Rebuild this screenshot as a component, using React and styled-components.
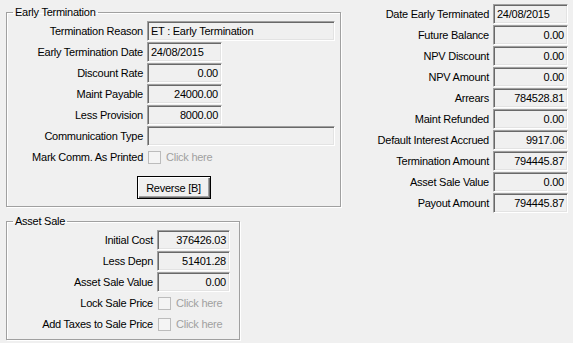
import React from "react";
import styled, { createGlobalStyle } from "styled-components";

const GlobalStyle = createGlobalStyle`
  html, body { margin: 0; padding: 0; background: #f0f0f0; }
  body {
    font-family: "Liberation Sans", Arial, sans-serif;
    font-size: 11px;
    letter-spacing: -0.25px;
    color: #000;
  }
`;

const Page = styled.div`
  width: 573px;
  height: 343px;
  display: grid;
  grid-template-columns: 341px 1fr;
  overflow: hidden;
  background: #f0f0f0;
`;

const LeftCol = styled.div`
  padding-left: 6px;
  display: flex;
  flex-direction: column;
`;

const GroupBox = styled.fieldset`
  box-sizing: border-box;
  width: ${(p) => p.$width}px;
  margin: ${(p) => p.$top}px 0 0 0;
  padding: ${(p) => p.$padTop}px 5px ${(p) => p.$padBottom}px 0;
  border: 1px solid #a0a0a0;
  box-shadow: inset 1px 1px 0 #fff, 1px 1px 0 #fff;
  min-width: 0;
`;

const Legend = styled.legend`
  margin-left: 6px;
  padding: 0 2px;
  line-height: 14px;
  height: 14px;
`;

const Rows = styled.div`
  display: grid;
  grid-template-columns: ${(p) => p.$label}px auto;
  column-gap: 4px;
  row-gap: 1px;
  align-items: center;
`;

const Label = styled.div`
  text-align: right;
  white-space: nowrap;
  line-height: 20px;
`;

const Box = styled.div`
  box-sizing: border-box;
  width: ${(p) => p.$w}px;
  height: 20px;
  background: #f0f0f0;
  border: 1px solid;
  border-color: #a0a0a0 #fff #fff #a0a0a0;
  box-shadow: inset 1px 1px 0 #696969, inset -1px -1px 0 #e3e3e3;
  padding: 0 3px 0 3px;
  line-height: 18px;
  white-space: nowrap;
  overflow: hidden;
  text-align: ${(p) => (p.$right ? "right" : "left")};
`;

const CheckWrap = styled.div`
  display: flex;
  align-items: center;
  height: 20px;
  gap: 5px;
  padding-left: 1px;
`;

const CheckBox = styled.span`
  box-sizing: border-box;
  width: 13px;
  height: 13px;
  border: 1px solid #bcbcbc;
  background: #f4f4f4;
`;

const Disabled = styled.span`
  color: #a0a0a0;
`;

const ButtonRow = styled.div`
  display: flex;
  justify-content: center;
  margin-top: 9px;
  padding-left: 5px;
`;

const Button = styled.button`
  box-sizing: border-box;
  width: 74px;
  height: 23px;
  font: inherit;
  letter-spacing: inherit;
  color: #000;
  background: #f0f0f0;
  border: 1px solid #000;
  box-shadow: inset 1px 1px 0 #fff, inset -1px -1px 0 #696969,
    inset -2px -2px 0 #a0a0a0;
  padding: 0;
`;

const RightCol = styled.div`
  padding-top: 4px;
`;

const Check = () => (
  <CheckWrap>
    <CheckBox />
    <Disabled>Click here</Disabled>
  </CheckWrap>
);

const rightRows = [
  ["Date Early Terminated", "24/08/2015", false],
  ["Future Balance", "0.00", true],
  ["NPV Discount", "0.00", true],
  ["NPV Amount", "0.00", true],
  ["Arrears", "784528.81", true],
  ["Maint Refunded", "0.00", true],
  ["Default Interest Accrued", "9917.06", true],
  ["Termination Amount", "794445.87", true],
  ["Asset Sale Value", "0.00", true],
  ["Payout Amount", "794445.87", true],
];

export default function App() {
  return (
    <>
      <GlobalStyle />
      <Page>
        <LeftCol>
          <GroupBox $width={335} $top={5} $padTop={2} $padBottom={7}>
            <Legend>Early Termination</Legend>
            <Rows $label={136}>
              <Label>Termination Reason</Label>
              <Box $w={188}>ET : Early Termination</Box>
              <Label>Early Termination Date</Label>
              <Box $w={75}>24/08/2015</Box>
              <Label>Discount Rate</Label>
              <Box $w={75} $right>0.00</Box>
              <Label>Maint Payable</Label>
              <Box $w={75} $right>24000.00</Box>
              <Label>Less Provision</Label>
              <Box $w={75} $right>8000.00</Box>
              <Label>Communication Type</Label>
              <Box $w={188} />
              <Label>Mark Comm. As Printed</Label>
              <Check />
            </Rows>
            <ButtonRow>
              <Button>Reverse [B]</Button>
            </ButtonRow>
          </GroupBox>
          <GroupBox $width={234} $top={7} $padTop={2} $padBottom={5}>
            <Legend>Asset Sale</Legend>
            <Rows $label={146}>
              <Label>Initial Cost</Label>
              <Box $w={73} $right>376426.03</Box>
              <Label>Less Depn</Label>
              <Box $w={73} $right>51401.28</Box>
              <Label>Asset Sale Value</Label>
              <Box $w={73} $right>0.00</Box>
              <Label>Lock Sale Price</Label>
              <Check />
              <Label>Add Taxes to Sale Price</Label>
              <Check />
            </Rows>
          </GroupBox>
        </LeftCol>
        <RightCol>
          <Rows $label={148}>
            {rightRows.map(([l, v, r]) => (
              <React.Fragment key={l}>
                <Label>{l}</Label>
                <Box $w={75} $right={r}>
                  {v}
                </Box>
              </React.Fragment>
            ))}
          </Rows>
        </RightCol>
      </Page>
    </>
  );
}
